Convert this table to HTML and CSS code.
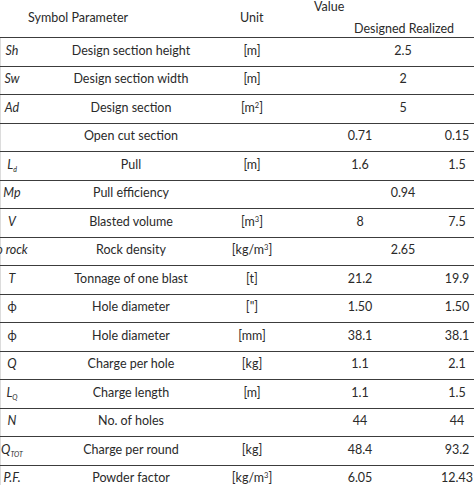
FILE: index.html
```html
<!DOCTYPE html>
<html>
<head>
<meta charset="utf-8">
<link rel="stylesheet" href="styles.css">
</head>
<body>
<div class="table">
  <div class="head">
    <span class="h-value">Value</span>
    <span class="h-sp">Symbol Parameter</span>
    <span class="h-unit">Unit</span>
    <span class="h-dr">Designed Realized</span>
  </div>
  <div class="row"><span class="c sym">Sh</span><span class="c">Design section height</span><span class="c">[m]</span><span class="c merged">2.5</span></div>
  <div class="row"><span class="c sym">Sw</span><span class="c">Design section width</span><span class="c">[m]</span><span class="c merged">2</span></div>
  <div class="row"><span class="c sym">Ad</span><span class="c">Design section</span><span class="c">[m<sup>2</sup>]</span><span class="c merged">5</span></div>
  <div class="row"><span class="c sym"></span><span class="c">Open cut section</span><span class="c"></span><span class="c">0.71</span><span class="c">0.15</span></div>
  <div class="row"><span class="c sym">L<sub>d</sub></span><span class="c">Pull</span><span class="c">[m]</span><span class="c">1.6</span><span class="c">1.5</span></div>
  <div class="row"><span class="c sym">Mp</span><span class="c">Pull efficiency</span><span class="c"></span><span class="c merged">0.94</span></div>
  <div class="row"><span class="c sym">V</span><span class="c">Blasted volume</span><span class="c">[m<sup>3</sup>]</span><span class="c">8</span><span class="c">7.5</span></div>
  <div class="row"><span class="c sym">ρ rock</span><span class="c">Rock density</span><span class="c">[kg/m<sup>3</sup>]</span><span class="c merged">2.65</span></div>
  <div class="row"><span class="c sym">T</span><span class="c">Tonnage of one blast</span><span class="c">[t]</span><span class="c">21.2</span><span class="c">19.9</span></div>
  <div class="row"><span class="c phi">ϕ</span><span class="c">Hole diameter</span><span class="c">["]</span><span class="c">1.50</span><span class="c">1.50</span></div>
  <div class="row"><span class="c phi">ϕ</span><span class="c">Hole diameter</span><span class="c">[mm]</span><span class="c">38.1</span><span class="c">38.1</span></div>
  <div class="row"><span class="c sym">Q</span><span class="c">Charge per hole</span><span class="c">[kg]</span><span class="c">1.1</span><span class="c">2.1</span></div>
  <div class="row"><span class="c sym">L<sub>Q</sub></span><span class="c">Charge length</span><span class="c">[m]</span><span class="c">1.1</span><span class="c">1.5</span></div>
  <div class="row"><span class="c sym">N</span><span class="c">No. of holes</span><span class="c"></span><span class="c">44</span><span class="c">44</span></div>
  <div class="row"><span class="c sym">Q<sub>TOT</sub></span><span class="c">Charge per round</span><span class="c">[kg]</span><span class="c">48.4</span><span class="c">93.2</span></div>
  <div class="row"><span class="c sym">P.F.</span><span class="c">Powder factor</span><span class="c">[kg/m<sup>3</sup>]</span><span class="c">6.05</span><span class="c">12.43</span></div>
</div>
</body>
</html>
```
FILE: styles.css
```css
html, body {
  margin: 0;
  padding: 0;
  background: #ffffff;
  overflow: hidden;
}
body {
  font-family: Lato, "Open Sans", sans-serif;
  font-size: 12.5px;
  color: #2a2a2a;
}
.table {
  margin-left: -40px;
  width: 540px;
}
.head {
  display: grid;
  grid-template-columns: 104px 134px 108px 108px 86px;
  grid-template-rows: 12px 11px 11px;
  height: 37px;
  box-sizing: border-box;
  line-height: 12px;
  white-space: nowrap;
}
.h-value {
  grid-column: 4 / 6;
  grid-row: 1;
  padding-left: 8px;
  padding-top: 1px;
  align-self: center;
}
.h-sp {
  grid-column: 1 / 3;
  grid-row: 2;
  padding-left: 68px;
  align-self: center;
}
.h-unit {
  grid-column: 3;
  grid-row: 2;
  padding-left: 42px;
  align-self: center;
}
.h-dr {
  grid-column: 4 / 6;
  grid-row: 3;
  padding-left: 48px;
  align-self: center;
}
.row {
  display: grid;
  grid-template-columns: 104px 134px 108px 108px 86px;
  height: 28.53px;
  box-sizing: border-box;
  border-top: 1.7px solid #3c3c3c;
  align-items: center;
  padding-bottom: 3px;
  background: linear-gradient(to right, transparent 40px, #dcdcdc 40px, #dcdcdc 41px, transparent 41px);
}
.c {
  text-align: center;
  white-space: nowrap;
}
.merged {
  grid-column: 4 / 6;
}
.sym {
  font-style: italic;
}
.sym sub {
  font-size: 7px;
  vertical-align: -3px;
  line-height: 0;
}
sup {
  font-size: 7.5px;
  vertical-align: 4px;
  line-height: 0;
}
```
